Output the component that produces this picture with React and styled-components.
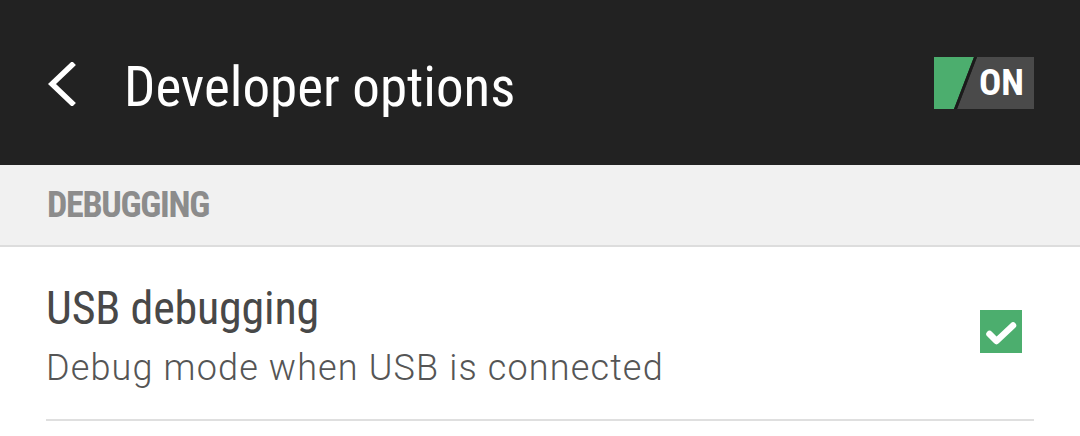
import React, { useState } from 'react'
import styled, { createGlobalStyle } from 'styled-components'

const GlobalStyle = createGlobalStyle`
  html, body {
    margin: 0;
    padding: 0;
    background: #ffffff;
  }
  body {
    font-family: "Roboto Condensed", Roboto, "Liberation Sans", sans-serif;
  }
`

const Screen = styled.div`
  width: 1080px;
  height: 436px;
  overflow: hidden;
  background: #ffffff;
`

const ActionBar = styled.header`
  height: 165px;
  background: #222222;
  display: flex;
  align-items: center;
  padding: 0 46px 0 44px;
  box-sizing: border-box;
`

const BackButton = styled.button`
  border: 0;
  background: none;
  padding: 0;
  width: 36px;
  height: 44px;
  margin: 3px 44px 0 0;
  display: flex;
  align-items: center;
  svg {
    display: block;
  }
`

const Title = styled.h1`
  flex: 1;
  margin: 0;
  color: #ffffff;
  font-size: 55px;
  font-weight: 400;
  line-height: 1;
  padding-top: 10px;
`

const Toggle = styled.div`
  display: flex;
  align-items: stretch;
  height: 52px;
  width: 100px;
  background: #222222;
  position: relative;
  cursor: pointer;
`

const ToggleLabel = styled.span`
  position: absolute;
  right: 10px;
  top: 0;
  bottom: 0;
  display: flex;
  align-items: center;
  color: #ffffff;
  font-weight: 700;
  font-size: 37px;
`

const SectionHeader = styled.div`
  height: 82px;
  background: #f1f1f1;
  border-bottom: 2px solid #dddddd;
  display: flex;
  align-items: center;
  padding: 0 47px;
  color: #8c8c8c;
  font-size: 36px;
  font-weight: 700;
  line-height: 1;
  letter-spacing: -1.3px;
  box-sizing: border-box;
`

const Row = styled.div`
  display: flex;
  align-items: center;
  margin: 0 46px;
  height: 174px;
  border-bottom: 2px solid #dfdfdf;
  box-sizing: border-box;
`

const RowText = styled.div`
  flex: 1;
  display: flex;
  flex-direction: column;
  gap: 11px;
  padding-top: 5px;
`

const RowTitle = styled.div`
  color: #484848;
  font-size: 46px;
  font-weight: 400;
  line-height: 1.2;
  letter-spacing: -0.2px;
`

const RowSummary = styled.div`
  color: #555555;
  font-family: Roboto, "Liberation Sans", sans-serif;
  font-size: 36px;
  font-weight: 300;
  line-height: 1.2;
  letter-spacing: 1.15px;
`

const CheckBox = styled.div`
  width: 42px;
  height: 43px;
  margin: 0 12px 4px 0;
  background: ${p => (p.checked ? '#4cae6e' : 'transparent')};
  border: ${p => (p.checked ? 'none' : '2px solid #999')};
  cursor: pointer;
  svg {
    display: block;
  }
`

const App = () => {
  const [enabled, setEnabled] = useState(true)
  const [usbDebug, setUsbDebug] = useState(true)

  return (
    <Screen>
      <GlobalStyle />
      <ActionBar>
        <BackButton aria-label="Back">
          <svg width="34" height="44" viewBox="0 0 34 44">
            <path
              d="M28 3 L8 22 L28 41"
              fill="none"
              stroke="#ffffff"
              strokeWidth="5.5"
              strokeLinecap="square"
            />
          </svg>
        </BackButton>
        <Title>Developer options</Title>
        <Toggle onClick={() => setEnabled(v => !v)}>
          <svg width="100" height="52" viewBox="0 0 100 52">
            <polygon points="0,0 40,0 20,52 0,52" fill={enabled ? '#4cae6e' : '#444'} />
            <polygon points="43,0 100,0 100,52 23,52" fill="#4a4a4a" />
            <polygon points="40,0 43,0 23,52 20,52" fill="#1b1b1b" />
          </svg>
          <ToggleLabel>{enabled ? 'ON' : 'OFF'}</ToggleLabel>
        </Toggle>
      </ActionBar>

      <SectionHeader>DEBUGGING</SectionHeader>

      <Row>
        <RowText>
          <RowTitle>USB debugging</RowTitle>
          <RowSummary>Debug mode when USB is connected</RowSummary>
        </RowText>
        <CheckBox checked={usbDebug} onClick={() => setUsbDebug(v => !v)}>
          {usbDebug && (
            <svg width="42" height="43" viewBox="0 0 42 43">
              <path
                d="M9.5 24 L16.5 31 L33 15.5"
                fill="none"
                stroke="#ffffff"
                strokeWidth="6.5"
                strokeLinecap="round"
                strokeLinejoin="round"
              />
            </svg>
          )}
        </CheckBox>
      </Row>
    </Screen>
  )
}

export default App
